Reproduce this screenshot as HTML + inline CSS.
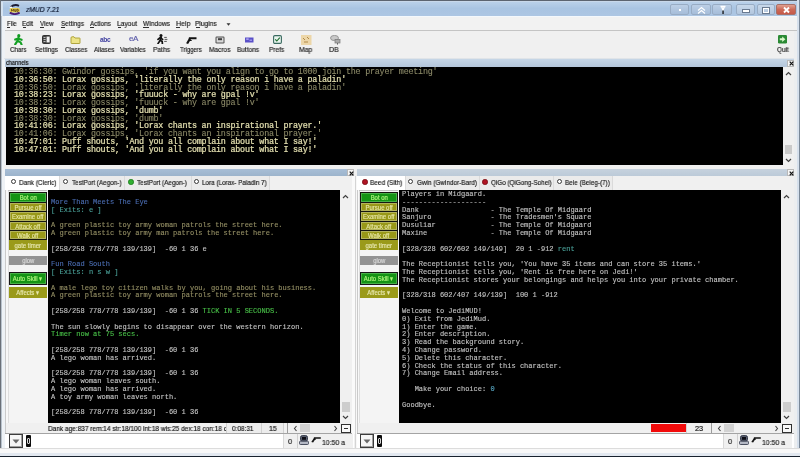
<!DOCTYPE html><html><head><meta charset="utf-8"><style>
*{margin:0;padding:0;box-sizing:border-box}
html,body{width:800px;height:457px;overflow:hidden;background:#f0f0f0;font-family:"Liberation Sans",sans-serif}
.a{position:absolute;will-change:transform}
.nw{white-space:nowrap}
.tx{-webkit-text-stroke:0.18px currentColor}
.ch{font-family:"Liberation Mono",monospace;font-size:8.4px;line-height:7.75px;letter-spacing:-0.215px;white-space:pre;color:#e4e0b0;font-weight:normal;-webkit-text-stroke:0.2px #e4e0b0}
.ch .d{color:#8c8a68;-webkit-text-stroke:0.1px #8c8a68}
.mt{font-family:"Liberation Mono",monospace;font-size:7.03px;line-height:7.80px;white-space:pre;color:#c4c4c4;-webkit-text-stroke:0.12px}
.bl{color:#4a6cb0}.cy{color:#4aa098}.ol{color:#948f64}.gr{color:#48c048}
</style></head><body>
<div class="a" style="left:0;top:0;width:800px;height:1px;background:#5c6470"></div>
<div class="a" style="left:0;top:0;width:1px;height:457px;background:#6a7078"></div>
<div class="a" style="left:1px;top:1px;width:796px;height:15px;background:linear-gradient(#bcd2ea,#a9c4e2 50%,#adc6e3)"></div>
<div class="a" style="left:1px;top:1px;width:2px;height:15px;background:#d4e2f0"></div>
<div class="a" style="left:1px;top:1px;width:796px;height:1px;background:#c8d8ea"></div>
<div class="a" style="left:797px;top:0;width:2px;height:457px;background:#d6e0ec"></div>
<div class="a" style="left:799px;top:0;width:1px;height:457px;background:#7a8898"></div>
<div class="a" style="left:1px;top:16px;width:796px;height:1px;background:#f4f8fc"></div>
<div class="a" style="left:1px;top:17px;width:796px;height:13px;background:#f2f2f2"></div>
<div class="a" style="left:1px;top:30px;width:796px;height:1px;background:#c4c4c4"></div>
<div class="a" style="left:1px;top:16px;width:1px;height:440px;background:#b8c2cc"></div>
<div class="a" style="left:2px;top:16px;width:3px;height:440px;background:#eef2f6"></div>
<div class="a" style="left:0;top:448px;width:800px;height:1px;background:#dcdcdc"></div>
<div class="a" style="left:0;top:449px;width:800px;height:4px;background:#f8f8f8"></div>
<div class="a" style="left:0;top:453px;width:800px;height:3px;background:#e2e8f0"></div>
<div class="a" style="left:0;top:456px;width:800px;height:1px;background:#18222e"></div>
<div class="a nw tx " style="left:25.73px;top:6.22px;font-size:7.54px;line-height:7.54px;color:#0e1830;transform:scaleX(0.885);transform-origin:0 0;font-style:italic">zMUD 7.21</div>
<svg class="a" style="left:8px;top:3px" width="13" height="12" viewBox="0 0 13 12">
<path d="M2.5 4.2 Q6.5 0.8 11 2.8" stroke="#1c1c34" stroke-width="1.9" fill="none"/>
<ellipse cx="3" cy="4.3" rx="1.4" ry="0.9" fill="#ffffff"/>
<rect x="1.5" y="5" width="10.5" height="4.6" rx="2.2" fill="#e6cc50"/>
<path d="M3.5 8.4 V6.2 L4.6 7.6 L5.7 6.2 V8.4 M6.8 6.2 V8.4 H8 V6.2 M9 6.2 V8.4 Q10.6 8.4 10.6 7.3 Q10.6 6.2 9 6.2" stroke="#5a4010" stroke-width="0.8" fill="none"/>
<path d="M1.8 9.6 Q6.8 12.6 11.6 9.6" stroke="#4a1c78" stroke-width="1.9" fill="none"/>
</svg>
<div class="a" style="left:670px;top:4px;width:19px;height:11px;border:1px solid #98acc4;border-radius:2px;background:linear-gradient(#bccfe6,#a6bdd9)"><div class="a" style="left:7.5px;top:3.5px;width:2px;height:2px;background:#fff"></div></div>
<div class="a" style="left:691px;top:4px;width:20px;height:11px;border:1px solid #98acc4;border-radius:2px;background:linear-gradient(#bccfe6,#a6bdd9)"><svg class="a" style="left:4.5px;top:0.5px" width="9" height="8"><path d="M1 4.5 L4.5 1.5 L8 4.5 M1 7.5 L4.5 4.5 L8 7.5" stroke="#fff" stroke-width="1.2" fill="none"/></svg></div>
<div class="a" style="left:712px;top:4px;width:20px;height:11px;border:1px solid #98acc4;border-radius:2px;background:linear-gradient(#bccfe6,#a6bdd9)"><svg class="a" style="left:5.5px;top:0px" width="8" height="10"><path d="M1.5 1.5 H6.5 M2.5 1.5 L4 5 L5.5 1.5" stroke="#fff" stroke-width="1.3" fill="none"/><rect x="3.4" y="5.5" width="1.3" height="3.5" fill="#101010"/></svg></div>
<div class="a" style="left:736px;top:4px;width:19px;height:11px;border:1px solid #98acc4;border-radius:2px;background:linear-gradient(#c8d8ea,#b2c6de)"><div class="a" style="left:6px;top:5px;width:6px;height:2px;background:#fff;box-shadow:0 0 0 1px #6a7a90"></div></div>
<div class="a" style="left:757px;top:4px;width:18px;height:11px;border:1px solid #98acc4;border-radius:2px;background:linear-gradient(#c8d8ea,#b2c6de)"><div class="a" style="left:5px;top:2.5px;width:6px;height:5px;border:1.3px solid #fff;box-shadow:0 0 0 1px #6a7a90"></div></div>
<div class="a" style="left:776px;top:4px;width:20px;height:11px;border:1px solid #a87068;border-radius:2px;background:linear-gradient(#e0a090,#cc6a58 50%,#c65848)"><svg class="a" style="left:4.5px;top:0.5px" width="9" height="8"><path d="M2 1.5 L7 6.5 M7 1.5 L2 6.5" stroke="#fff" stroke-width="1.9"/></svg></div>
<div class="a nw tx " style="left:6.50px;top:19.50px;font-size:7.68px;line-height:7.68px;color:#1a1a1a;transform:scaleX(0.789);transform-origin:0 0;">File</div>
<div class="a" style="left:7.00px;top:27px;width:2.96px;height:1px;background:#303030"></div>
<div class="a nw tx " style="left:22.47px;top:19.50px;font-size:7.68px;line-height:7.68px;color:#1a1a1a;transform:scaleX(0.837);transform-origin:0 0;">Edit</div>
<div class="a" style="left:23.00px;top:27px;width:3.48px;height:1px;background:#303030"></div>
<div class="a nw tx " style="left:39.97px;top:19.50px;font-size:7.68px;line-height:7.68px;color:#1a1a1a;transform:scaleX(0.827);transform-origin:0 0;">View</div>
<div class="a" style="left:40.00px;top:27px;width:4.18px;height:1px;background:#303030"></div>
<div class="a nw tx " style="left:60.71px;top:19.50px;font-size:7.68px;line-height:7.68px;color:#1a1a1a;transform:scaleX(0.829);transform-origin:0 0;">Settings</div>
<div class="a" style="left:61.00px;top:27px;width:3.67px;height:1px;background:#303030"></div>
<div class="a nw tx " style="left:90.24px;top:19.50px;font-size:7.68px;line-height:7.68px;color:#1a1a1a;transform:scaleX(0.829);transform-origin:0 0;">Actions</div>
<div class="a" style="left:90.25px;top:27px;width:4.22px;height:1px;background:#303030"></div>
<div class="a nw tx " style="left:116.95px;top:19.50px;font-size:7.68px;line-height:7.68px;color:#1a1a1a;transform:scaleX(0.871);transform-origin:0 0;">Layout</div>
<div class="a" style="left:117.50px;top:27px;width:2.95px;height:1px;background:#303030"></div>
<div class="a nw tx " style="left:143.22px;top:19.50px;font-size:7.68px;line-height:7.68px;color:#1a1a1a;transform:scaleX(0.867);transform-origin:0 0;">Windows</div>
<div class="a" style="left:143.25px;top:27px;width:6.23px;height:1px;background:#303030"></div>
<div class="a nw tx " style="left:175.67px;top:19.50px;font-size:7.68px;line-height:7.68px;color:#1a1a1a;transform:scaleX(0.926);transform-origin:0 0;">Help</div>
<div class="a" style="left:176.25px;top:27px;width:3.97px;height:1px;background:#303030"></div>
<div class="a nw tx " style="left:195.21px;top:19.50px;font-size:7.68px;line-height:7.68px;color:#1a1a1a;transform:scaleX(0.865);transform-origin:0 0;">Plugins</div>
<div class="a" style="left:195.75px;top:27px;width:3.54px;height:1px;background:#303030"></div>
<svg class="a" style="left:225.8px;top:22.5px" width="5" height="3"><path d="M0.5 0.3 H4.5 L2.5 2.8 Z" fill="#333"/></svg>
<div class="a nw tx " style="left:9.69px;top:45.85px;font-size:7.26px;line-height:7.26px;color:#222;transform:scaleX(0.854);transform-origin:0 0;">Chars</div>
<div class="a nw tx " style="left:35.46px;top:45.85px;font-size:7.26px;line-height:7.26px;color:#222;transform:scaleX(0.877);transform-origin:0 0;">Settings</div>
<div class="a nw tx " style="left:64.68px;top:45.85px;font-size:7.26px;line-height:7.26px;color:#222;transform:scaleX(0.863);transform-origin:0 0;">Classes</div>
<div class="a nw tx " style="left:93.99px;top:45.85px;font-size:7.26px;line-height:7.26px;color:#222;transform:scaleX(0.875);transform-origin:0 0;">Aliases</div>
<div class="a nw tx " style="left:119.97px;top:45.85px;font-size:7.26px;line-height:7.26px;color:#222;transform:scaleX(0.867);transform-origin:0 0;">Variables</div>
<div class="a nw tx " style="left:153.20px;top:45.85px;font-size:7.26px;line-height:7.26px;color:#222;transform:scaleX(0.917);transform-origin:0 0;">Paths</div>
<div class="a nw tx " style="left:180.36px;top:45.85px;font-size:7.26px;line-height:7.26px;color:#222;transform:scaleX(0.828);transform-origin:0 0;">Triggers</div>
<div class="a nw tx " style="left:208.71px;top:45.85px;font-size:7.26px;line-height:7.26px;color:#222;transform:scaleX(0.904);transform-origin:0 0;">Macros</div>
<div class="a nw tx " style="left:237.47px;top:45.85px;font-size:7.26px;line-height:7.26px;color:#222;transform:scaleX(0.894);transform-origin:0 0;">Buttons</div>
<div class="a nw tx " style="left:269.46px;top:45.85px;font-size:7.26px;line-height:7.26px;color:#222;transform:scaleX(0.901);transform-origin:0 0;">Prefs</div>
<div class="a nw tx " style="left:298.94px;top:45.85px;font-size:7.26px;line-height:7.26px;color:#222;transform:scaleX(0.945);transform-origin:0 0;">Map</div>
<div class="a nw tx " style="left:329.43px;top:45.85px;font-size:7.26px;line-height:7.26px;color:#222;transform:scaleX(0.960);transform-origin:0 0;">DB</div>
<div class="a nw tx " style="left:776.70px;top:45.85px;font-size:7.26px;line-height:7.26px;color:#222;transform:scaleX(0.874);transform-origin:0 0;">Quit</div>
<svg class="a" style="left:14px;top:34px" width="9" height="11" viewBox="0 0 9 11">
<circle cx="4.8" cy="1.7" r="1.6" fill="#129a22"/>
<path d="M4.6 3.4 L3.4 7 M1.2 5.6 L4 4.6 L7.6 5.8 M3.6 6.6 L1.2 10.4 M3.8 6.8 L6.6 8.4 L7.6 10.6" stroke="#14a024" stroke-width="2.1" stroke-linecap="round" fill="none"/>
</svg>
<svg class="a" style="left:42px;top:35px" width="9" height="9" viewBox="0 0 9 9">
<rect x="0.5" y="0.5" width="8" height="8" rx="1" fill="#444" stroke="#333"/>
<rect x="4.6" y="1.6" width="3" height="5.8" fill="#f4f4f4"/>
<rect x="1.5" y="2" width="2" height="1" fill="#bbb"/><rect x="1.5" y="4" width="2.2" height="1" fill="#bbb"/><rect x="1.5" y="6" width="2" height="1" fill="#bbb"/>
</svg>
<svg class="a" style="left:70px;top:35.5px" width="11" height="8" viewBox="0 0 11 8">
<path d="M1 2 L1 7 Q1 7.5 1.5 7.5 H9.5 Q10 7.5 10 7 V2.5 Q10 2 9.5 2 H5 L4 0.8 H2 Q1 0.8 1 2 Z" fill="#ece488" stroke="#a89c30" stroke-width="0.9"/>
</svg>
<div class="a nw" style="left:100.3px;top:36.2px;font-size:6.6px;line-height:7px;font-weight:bold;color:#4040a0;letter-spacing:-0.35px">abc</div>
<div class="a nw" style="left:128.8px;top:34.8px;font-size:8px;line-height:8px;color:#5a5aa8;letter-spacing:-0.5px;-webkit-text-stroke:0.2px #5a5aa8">eA</div>
<svg class="a" style="left:157px;top:34px" width="11" height="10" viewBox="0 0 11 10">
<circle cx="4" cy="1.5" r="1.5" fill="#111"/>
<path d="M4.2 3.2 L3.2 6.4 M1 5.4 L3.2 3.6 L5.6 5.4 M3.2 6.2 L1 9.6 M3.4 6.4 L5.2 7.6 L5.4 9.8" stroke="#111" stroke-width="1.7" stroke-linecap="round" fill="none"/>
<path d="M7.2 3.4 H9.8 M7.6 5.4 H10.4 M7.2 7.4 H9.8" stroke="#444" stroke-width="0.9"/>
</svg>
<svg class="a" style="left:186px;top:36.5px" width="11" height="7" viewBox="0 0 11 7">
<path d="M3 0.3 H10.5 V2.2 H5 L4.5 2.9 H6 L5.4 4 H3.9 L2.1 6.9 L0.1 6.2 L2.5 2.1 Z" fill="#121212"/>
</svg>
<svg class="a" style="left:215px;top:36px" width="10" height="8" viewBox="0 0 10 8">
<rect x="0.5" y="0.5" width="9" height="7" rx="1.2" fill="#505050"/>
<rect x="1.5" y="1.5" width="7" height="5" fill="#d8d8d8"/>
<rect x="3" y="2.2" width="4" height="2" fill="#404040"/>
</svg>
<svg class="a" style="left:245px;top:36.5px" width="9" height="6" viewBox="0 0 9 6">
<rect x="0" y="0.5" width="8.5" height="5" fill="#5a50c8"/>
<rect x="1.2" y="1.5" width="2.5" height="1.2" fill="#c8c0ff"/><rect x="4.5" y="2.5" width="2.5" height="1.5" fill="#9890e8"/>
</svg>
<svg class="a" style="left:272.5px;top:35px" width="9" height="9" viewBox="0 0 9 9">
<rect x="0.6" y="0.6" width="7.8" height="7.8" rx="1.2" fill="#e8f4ee" stroke="#3a6a60" stroke-width="1.1"/>
<path d="M2.2 4.4 L3.8 6 L6.8 2.6" stroke="#1a6a2a" stroke-width="1.1" fill="none"/>
</svg>
<svg class="a" style="left:301px;top:34.5px" width="11" height="10" viewBox="0 0 11 10">
<rect x="0" y="0" width="10.5" height="10" fill="#ecd6a8"/>
<path d="M2 3 L4 5 M6 2 L8 4 M3 7 H7" stroke="#b08848" stroke-width="1"/>
</svg>
<svg class="a" style="left:330px;top:35px" width="11" height="10" viewBox="0 0 11 10">
<ellipse cx="4.5" cy="3" rx="4" ry="2.6" fill="#c8c8c8" stroke="#888" stroke-width="0.8"/>
<rect x="5" y="4.5" width="5" height="3.5" fill="#aaa" stroke="#777" stroke-width="0.7"/>
<path d="M7.5 8 V9.6" stroke="#666" stroke-width="1"/>
</svg>
<svg class="a" style="left:778px;top:34.5px" width="9" height="9" viewBox="0 0 9 9">
<rect x="0" y="0" width="9" height="8.5" rx="1.2" fill="#2a8a34"/>
<path d="M1.8 3.2 H4.2 V1.5 L7.4 4.25 L4.2 7 V5.3 H1.8 Z" fill="#d8f8c8"/>
</svg>
<div class="a" style="left:4px;top:58px;width:790px;height:1px;background:#e0e4e8"></div>
<div class="a" style="left:5px;top:59px;width:789px;height:8px;background:linear-gradient(#c6d6e6,#b4c6da)"></div>
<div class="a nw tx " style="left:5.76px;top:59.93px;font-size:6.70px;line-height:6.70px;color:#101010;transform:scaleX(0.836);transform-origin:0 0;">channels</div>
<div class="a" style="left:787px;top:59.5px;width:7px;height:7px;background:#f6f6f6;border:1px solid #b8b8b8"></div>
<svg class="a" style="left:788.5px;top:61px" width="5" height="5"><path d="M0.7 0.7 L4.3 4.3 M4.3 0.7 L0.7 4.3" stroke="#111" stroke-width="1.2"/></svg>
<div class="a" style="left:6px;top:67px;width:777px;height:98px;background:#000"></div>
<div class="a" style="left:783px;top:67px;width:10px;height:98px;background:#f0f0f0"></div>
<svg class="a" style="left:785px;top:70.5px" width="7" height="5"><path d="M1 4 L3.5 1.5 L6 4" stroke="#404040" stroke-width="1.2" fill="none"/></svg>
<svg class="a" style="left:785px;top:158px" width="7" height="5"><path d="M1 1 L3.5 3.5 L6 1" stroke="#404040" stroke-width="1.2" fill="none"/></svg>
<div class="a" style="left:785px;top:145px;width:7px;height:9px;background:#cacaca"></div>
<div class="a ch" id="chan" style="left:14.4px;top:69.3px"><span class="d">10:36:30: Gwindor gossips, 'if you want you align to go to 1000 join the prayer meeting'</span>
10:36:50: Lorax gossips, 'literally the only reason i have a paladin'
<span class="d">10:36:50: Lorax gossips, 'literally the only reason i have a paladin'</span>
10:38:23: Lorax gossips, 'fuuuck - why are gpal !v'
<span class="d">10:38:23: Lorax gossips, 'fuuuck - why are gpal !v'</span>
10:38:30: Lorax gossips, 'dumb'
<span class="d">10:38:30: Lorax gossips, 'dumb'</span>
10:41:06: Lorax gossips, 'Lorax chants an inspirational prayer.'
<span class="d">10:41:06: Lorax gossips, 'Lorax chants an inspirational prayer.'</span>
10:47:01: Puff shouts, 'And you all complain about what I say!'
10:47:01: Puff shouts, 'And you all complain about what I say!'</div>
<div class="a" style="left:4px;top:165px;width:793px;height:4px;background:#f0f0f0"></div>
<div class="a" style="left:5px;top:169px;width:349px;height:7px;background:linear-gradient(#a8bed6,#9cb4cc)"></div>
<div class="a" style="left:347px;top:169px;width:7px;height:7px;background:#f6f6f6;border:1px solid #b8b8b8"></div>
<svg class="a" style="left:348.5px;top:170.5px" width="5" height="5"><path d="M0.7 0.7 L4.3 4.3 M4.3 0.7 L0.7 4.3" stroke="#111" stroke-width="1.2"/></svg>
<div class="a" style="left:5px;top:176px;width:349px;height:14px;background:#f0f0f0"></div>
<div class="a" style="left:5px;top:176px;width:55px;height:14px;background:#ffffff;border-right:1px solid #dadada"></div>
<div class="a" style="left:10.8px;top:179.2px;width:5px;height:5px;border-radius:50%;border:1px solid #383838;background:#fff"></div>
<div class="a nw tx " style="left:18.97px;top:178.85px;font-size:7.26px;line-height:7.26px;color:#1a1a1a;transform:scaleX(0.883);transform-origin:0 0;">Dank (Cleric)</div>
<div class="a" style="left:60px;top:176px;width:65px;height:14px;background:#ebebeb;border-right:1px solid #dadada"></div>
<div class="a" style="left:63.3px;top:179.2px;width:5px;height:5px;border-radius:50%;border:1px solid #383838;background:#fff"></div>
<div class="a nw tx " style="left:71.86px;top:178.85px;font-size:7.26px;line-height:7.26px;color:#1a1a1a;transform:scaleX(0.869);transform-origin:0 0;">TestPort (Aegon-)</div>
<div class="a" style="left:125px;top:176px;width:67px;height:14px;background:#ebebeb;border-right:1px solid #dadada"></div>
<div class="a" style="left:128.45000000000002px;top:179px;width:5.5px;height:5.5px;border-radius:50%;background:#30b030;border:1px solid #208020"></div>
<div class="a nw tx " style="left:137.26px;top:178.85px;font-size:7.26px;line-height:7.26px;color:#1a1a1a;transform:scaleX(0.877);transform-origin:0 0;">TestPort (Aegon-)</div>
<div class="a" style="left:192px;top:176px;width:78px;height:14px;background:#ebebeb;border-right:1px solid #dadada"></div>
<div class="a" style="left:193.8px;top:179.2px;width:5px;height:5px;border-radius:50%;border:1px solid #383838;background:#fff"></div>
<div class="a nw tx " style="left:201.98px;top:178.85px;font-size:7.26px;line-height:7.26px;color:#1a1a1a;transform:scaleX(0.871);transform-origin:0 0;">Lora (Lorax- Paladin 7)</div>
<div class="a" style="left:5px;top:190px;width:43px;height:233px;background:#f4f4f4"></div>
<div class="a" style="left:5px;top:190px;width:1px;height:243px;background:#cacaca"></div>
<div class="a" style="left:6px;top:190px;width:2px;height:233px;background:#f8f8f8"></div>
<div class="a" style="left:8px;top:190px;width:1px;height:233px;background:#dedede"></div>
<div class="a" style="left:8px;top:190px;width:39px;height:1px;background:#c4c4c4"></div>
<div class="a" style="left:9px;top:192px;width:38px;height:48px;background:#161610"></div>
<div class="a" style="left:9px;top:272px;width:38px;height:13px;background:#161616"></div>
<div class="a" style="left:10px;top:193px;width:36px;height:9px;background:#149414;border:1px solid #48b048"></div>
<div class="a nw" style="left:9px;top:193.8px;width:38px;height:9px;line-height:9px;font-size:7.1px;text-align:center;color:#b4f880;overflow:visible;-webkit-text-stroke:0.15px #b4f880"><span style="display:inline-block;transform:scaleX(.84)">Bot on</span></div>
<div class="a" style="left:10px;top:203px;width:36px;height:8px;background:#989818;border:1px solid #b4b45c"></div>
<div class="a nw" style="left:9px;top:203.8px;width:38px;height:8px;line-height:8px;font-size:7.1px;text-align:center;color:#e6e6a6;overflow:visible;-webkit-text-stroke:0.15px #e6e6a6"><span style="display:inline-block;transform:scaleX(.84)">Pursue off</span></div>
<div class="a" style="left:10px;top:212px;width:36px;height:9px;background:#989818;border:1px solid #b4b45c"></div>
<div class="a nw" style="left:9px;top:212.8px;width:38px;height:9px;line-height:9px;font-size:7.1px;text-align:center;color:#e6e6a6;overflow:visible;-webkit-text-stroke:0.15px #e6e6a6"><span style="display:inline-block;transform:scaleX(.84)">Examine off</span></div>
<div class="a" style="left:10px;top:222px;width:36px;height:8px;background:#989818;border:1px solid #b4b45c"></div>
<div class="a nw" style="left:9px;top:222.8px;width:38px;height:8px;line-height:8px;font-size:7.1px;text-align:center;color:#e6e6a6;overflow:visible;-webkit-text-stroke:0.15px #e6e6a6"><span style="display:inline-block;transform:scaleX(.84)">Attack off</span></div>
<div class="a" style="left:10px;top:231px;width:36px;height:8px;background:#989818;border:1px solid #b4b45c"></div>
<div class="a nw" style="left:9px;top:231.8px;width:38px;height:8px;line-height:8px;font-size:7.1px;text-align:center;color:#e6e6a6;overflow:visible;-webkit-text-stroke:0.15px #e6e6a6"><span style="display:inline-block;transform:scaleX(.84)">Walk off</span></div>
<div class="a" style="left:9px;top:240px;width:38px;height:10px;background:#9a9a1a"></div>
<div class="a nw" style="left:9px;top:240.8px;width:38px;height:10px;line-height:10px;font-size:7.1px;text-align:center;color:#e8e8b0;overflow:visible;-webkit-text-stroke:0.15px #e8e8b0"><span style="display:inline-block;transform:scaleX(.84)">gate timer</span></div>
<div class="a" style="left:9px;top:256px;width:38px;height:9px;background:#939393"></div>
<div class="a nw" style="left:9px;top:256.8px;width:38px;height:9px;line-height:9px;font-size:7.1px;text-align:center;color:#dcdcdc;overflow:visible;-webkit-text-stroke:0.15px #dcdcdc"><span style="display:inline-block;transform:scaleX(.84)">glow</span></div>
<div class="a" style="left:10px;top:273px;width:36px;height:11px;background:#149414;border:1px solid #48b048"></div>
<div class="a nw" style="left:9px;top:273.8px;width:38px;height:11px;line-height:11px;font-size:7.1px;text-align:center;color:#b4f880;overflow:visible;-webkit-text-stroke:0.15px #b4f880"><span style="display:inline-block;transform:scaleX(.84)">Auto Skill ▾</span></div>
<div class="a" style="left:9px;top:287px;width:38px;height:11px;background:#9a9a1a"></div>
<div class="a nw" style="left:9px;top:287.8px;width:38px;height:11px;line-height:11px;font-size:7.1px;text-align:center;color:#e8e8b0;overflow:visible;-webkit-text-stroke:0.15px #e8e8b0"><span style="display:inline-block;transform:scaleX(.84)">Affects ▾</span></div>
<div class="a" style="left:48px;top:190px;width:292px;height:233px;background:#000"></div>
<div class="a" style="left:340px;top:190px;width:12px;height:233px;background:#f0f0f0"></div>
<svg class="a" style="left:341.5px;top:194px" width="7" height="5"><path d="M1 4 L3.5 1.5 L6 4" stroke="#404040" stroke-width="1.2" fill="none"/></svg>
<svg class="a" style="left:341.5px;top:415px" width="7" height="5"><path d="M1 1 L3.5 3.5 L6 1" stroke="#404040" stroke-width="1.2" fill="none"/></svg>
<div class="a" style="left:342px;top:402px;width:8px;height:10px;background:#cdcdcd"></div>
<div class="a mt" style="left:50.8px;top:190.9px">
<span class="bl">More Than Meets The Eye</span>
<span class="cy">[ Exits: e ]</span>

<span class="ol">A green plastic toy army woman patrols the street here.</span>
<span class="ol">A green plastic toy army man patrols the street here.</span>

[258/258 778/778 139/139]  -60 1 36 e

<span class="bl">Fun Road South</span>
<span class="cy">[ Exits: n s w ]</span>

<span class="ol">A male lego toy citizen walks by you, going about his business.</span>
<span class="ol">A green plastic toy army woman patrols the street here.</span>

[258/258 778/778 139/139]  -60 1 36 <span class="gr">TICK IN 5 SECONDS.</span>

The sun slowly begins to disappear over the western horizon.
<span class="gr">Timer now at 75 secs.</span>

[258/258 778/778 139/139]  -60 1 36
A lego woman has arrived.

[258/258 778/778 139/139]  -60 1 36
A lego woman leaves south.
A lego woman has arrived.
A toy army woman leaves north.

[258/258 778/778 139/139]  -60 1 36</div>
<div class="a" style="left:48px;top:423px;width:304px;height:10px;background:#f0f0f0"></div>
<div class="a nw tx " style="left:48.47px;top:424.53px;font-size:7.40px;line-height:7.40px;color:#141414;transform:scaleX(0.880);transform-origin:0 0;">Dank age:837 rem:14 str:18/100 int:18 wis:25 dex:18 con:18 c</div>
<div class="a" style="left:226px;top:423px;width:57px;height:10px;background:#ececec"></div>
<div class="a" style="left:226px;top:423px;width:1px;height:10px;background:#d0d0d0"></div>
<div class="a nw tx " style="left:232.25px;top:424.53px;font-size:7.40px;line-height:7.40px;color:#141414;transform:scaleX(0.873);transform-origin:0 0;">0:08:31</div>
<div class="a" style="left:261px;top:423px;width:1px;height:10px;background:#d0d0d0"></div>
<div class="a nw tx " style="left:269.46px;top:424.53px;font-size:7.40px;line-height:7.40px;color:#141414;transform:scaleX(0.951);transform-origin:0 0;">15</div>
<div class="a" style="left:283px;top:423px;width:1px;height:10px;background:#d0d0d0"></div>
<div class="a" style="left:287px;top:423px;width:1px;height:10px;background:#9c9c9c"></div>
<svg class="a" style="left:293px;top:425px" width="5" height="7"><path d="M3.5 1 L1.5 3.5 L3.5 6" stroke="#404040" stroke-width="1.1" fill="none"/></svg>
<div class="a" style="left:300px;top:424px;width:10px;height:8px;background:#d2d2d2"></div>
<svg class="a" style="left:333px;top:425px" width="5" height="7"><path d="M1.5 1 L3.5 3.5 L1.5 6" stroke="#404040" stroke-width="1.1" fill="none"/></svg>
<div class="a" style="left:341px;top:424px;width:10px;height:9px;border:1px solid #303030;background:#f8f8f8"><div class="a" style="left:2px;top:3px;width:4px;height:1px;background:#303030"></div></div>
<div class="a" style="left:5px;top:433px;width:349px;height:1px;background:#a4a4a4"></div>
<div class="a" style="left:5px;top:434px;width:349px;height:14px;background:#ffffff"></div>
<div class="a" style="left:9px;top:434px;width:14px;height:14px;border:1px solid #3c3c3c;background:#f6f6f6;box-shadow:inset -1px -1px 0 #a0a0a0"></div>
<svg class="a" style="left:12px;top:438.5px" width="8" height="5"><path d="M0.5 0.5 H7.5 L4 4.5 Z" fill="#6a6a6a"/></svg>
<div class="a" style="left:25.5px;top:435px;width:4.5px;height:11.5px;background:#0c0c0c;border-radius:1px"></div>
<div class="a" style="left:26.5px;top:437.5px;width:2.5px;height:6px;border:0.8px solid #d8d8d8;border-radius:1px"></div>
<div class="a" style="left:357px;top:169px;width:437px;height:7px;background:linear-gradient(#c6d2de,#bccad8)"></div>
<div class="a" style="left:787px;top:169px;width:7px;height:7px;background:#f6f6f6;border:1px solid #b8b8b8"></div>
<svg class="a" style="left:788.5px;top:170.5px" width="5" height="5"><path d="M0.7 0.7 L4.3 4.3 M4.3 0.7 L0.7 4.3" stroke="#111" stroke-width="1.2"/></svg>
<div class="a" style="left:357px;top:176px;width:437px;height:14px;background:#f0f0f0"></div>
<div class="a" style="left:357px;top:176px;width:49px;height:14px;background:#ffffff;border-right:1px solid #dadada"></div>
<div class="a" style="left:361.55px;top:179px;width:5.5px;height:5.5px;border-radius:50%;background:#b01424;border:1px solid #801018"></div>
<div class="a nw tx " style="left:369.97px;top:178.85px;font-size:7.26px;line-height:7.26px;color:#1a1a1a;transform:scaleX(0.893);transform-origin:0 0;">Beed (Sith)</div>
<div class="a" style="left:406px;top:176px;width:74px;height:14px;background:#ebebeb;border-right:1px solid #dadada"></div>
<div class="a" style="left:408.3px;top:179.2px;width:5px;height:5px;border-radius:50%;border:1px solid #383838;background:#fff"></div>
<div class="a nw tx " style="left:416.68px;top:178.85px;font-size:7.26px;line-height:7.26px;color:#1a1a1a;transform:scaleX(0.879);transform-origin:0 0;">Gwin (Gwindor-Bard)</div>
<div class="a" style="left:480px;top:176px;width:74px;height:14px;background:#ebebeb;border-right:1px solid #dadada"></div>
<div class="a" style="left:482.3px;top:179px;width:5.5px;height:5.5px;border-radius:50%;background:#b01424;border:1px solid #801018"></div>
<div class="a nw tx " style="left:490.95px;top:178.85px;font-size:7.26px;line-height:7.26px;color:#1a1a1a;transform:scaleX(0.871);transform-origin:0 0;">QiGo (QiGong-Sohei)</div>
<div class="a" style="left:554px;top:176px;width:59px;height:14px;background:#ebebeb;border-right:1px solid #dadada"></div>
<div class="a" style="left:557.3px;top:179.2px;width:5px;height:5px;border-radius:50%;border:1px solid #383838;background:#fff"></div>
<div class="a nw tx " style="left:565.48px;top:178.85px;font-size:7.26px;line-height:7.26px;color:#1a1a1a;transform:scaleX(0.876);transform-origin:0 0;">Bele (Beleg-(7))</div>
<div class="a" style="left:357px;top:190px;width:42px;height:233px;background:#f4f4f4"></div>
<div class="a" style="left:357px;top:190px;width:1px;height:243px;background:#cacaca"></div>
<div class="a" style="left:358px;top:190px;width:1px;height:233px;background:#f8f8f8"></div>
<div class="a" style="left:359px;top:190px;width:1px;height:233px;background:#dedede"></div>
<div class="a" style="left:359px;top:190px;width:39px;height:1px;background:#c4c4c4"></div>
<div class="a" style="left:360px;top:192px;width:38px;height:48px;background:#161610"></div>
<div class="a" style="left:360px;top:272px;width:38px;height:13px;background:#161616"></div>
<div class="a" style="left:361px;top:193px;width:36px;height:9px;background:#149414;border:1px solid #48b048"></div>
<div class="a nw" style="left:360px;top:193.8px;width:38px;height:9px;line-height:9px;font-size:7.1px;text-align:center;color:#b4f880;overflow:visible;-webkit-text-stroke:0.15px #b4f880"><span style="display:inline-block;transform:scaleX(.84)">Bot on</span></div>
<div class="a" style="left:361px;top:203px;width:36px;height:8px;background:#989818;border:1px solid #b4b45c"></div>
<div class="a nw" style="left:360px;top:203.8px;width:38px;height:8px;line-height:8px;font-size:7.1px;text-align:center;color:#e6e6a6;overflow:visible;-webkit-text-stroke:0.15px #e6e6a6"><span style="display:inline-block;transform:scaleX(.84)">Pursue off</span></div>
<div class="a" style="left:361px;top:212px;width:36px;height:9px;background:#989818;border:1px solid #b4b45c"></div>
<div class="a nw" style="left:360px;top:212.8px;width:38px;height:9px;line-height:9px;font-size:7.1px;text-align:center;color:#e6e6a6;overflow:visible;-webkit-text-stroke:0.15px #e6e6a6"><span style="display:inline-block;transform:scaleX(.84)">Examine off</span></div>
<div class="a" style="left:361px;top:222px;width:36px;height:8px;background:#989818;border:1px solid #b4b45c"></div>
<div class="a nw" style="left:360px;top:222.8px;width:38px;height:8px;line-height:8px;font-size:7.1px;text-align:center;color:#e6e6a6;overflow:visible;-webkit-text-stroke:0.15px #e6e6a6"><span style="display:inline-block;transform:scaleX(.84)">Attack off</span></div>
<div class="a" style="left:361px;top:231px;width:36px;height:8px;background:#989818;border:1px solid #b4b45c"></div>
<div class="a nw" style="left:360px;top:231.8px;width:38px;height:8px;line-height:8px;font-size:7.1px;text-align:center;color:#e6e6a6;overflow:visible;-webkit-text-stroke:0.15px #e6e6a6"><span style="display:inline-block;transform:scaleX(.84)">Walk off</span></div>
<div class="a" style="left:360px;top:240px;width:38px;height:10px;background:#9a9a1a"></div>
<div class="a nw" style="left:360px;top:240.8px;width:38px;height:10px;line-height:10px;font-size:7.1px;text-align:center;color:#e8e8b0;overflow:visible;-webkit-text-stroke:0.15px #e8e8b0"><span style="display:inline-block;transform:scaleX(.84)">gate timer</span></div>
<div class="a" style="left:360px;top:256px;width:38px;height:9px;background:#939393"></div>
<div class="a nw" style="left:360px;top:256.8px;width:38px;height:9px;line-height:9px;font-size:7.1px;text-align:center;color:#dcdcdc;overflow:visible;-webkit-text-stroke:0.15px #dcdcdc"><span style="display:inline-block;transform:scaleX(.84)">glow</span></div>
<div class="a" style="left:361px;top:273px;width:36px;height:11px;background:#149414;border:1px solid #48b048"></div>
<div class="a nw" style="left:360px;top:273.8px;width:38px;height:11px;line-height:11px;font-size:7.1px;text-align:center;color:#b4f880;overflow:visible;-webkit-text-stroke:0.15px #b4f880"><span style="display:inline-block;transform:scaleX(.84)">Auto Skill ▾</span></div>
<div class="a" style="left:360px;top:287px;width:38px;height:11px;background:#9a9a1a"></div>
<div class="a nw" style="left:360px;top:287.8px;width:38px;height:11px;line-height:11px;font-size:7.1px;text-align:center;color:#e8e8b0;overflow:visible;-webkit-text-stroke:0.15px #e8e8b0"><span style="display:inline-block;transform:scaleX(.84)">Affects ▾</span></div>
<div class="a" style="left:399px;top:190px;width:382px;height:233px;background:#000"></div>
<div class="a" style="left:781px;top:190px;width:12px;height:233px;background:#f0f0f0"></div>
<svg class="a" style="left:782.5px;top:194px" width="7" height="5"><path d="M1 4 L3.5 1.5 L6 4" stroke="#404040" stroke-width="1.2" fill="none"/></svg>
<svg class="a" style="left:782.5px;top:415px" width="7" height="5"><path d="M1 1 L3.5 3.5 L6 1" stroke="#404040" stroke-width="1.2" fill="none"/></svg>
<div class="a" style="left:783px;top:402px;width:8px;height:10px;background:#cdcdcd"></div>
<div class="a mt" style="left:401.8px;top:190.9px">Players in Midgaard.
--------------------
Dank                 - The Temple Of Midgaard
Sanjuro              - The Tradesmen's Square
Dusuliar             - The Temple Of Midgaard
Maxine               - The Temple Of Midgaard

[328/328 602/602 149/149]  20 1 -912 <span class="cy">rent</span>

The Receptionist tells you, 'You have 35 items and can store 35 items.'
The Receptionist tells you, 'Rent is free here on Jedi!'
The Receptionist stores your belongings and helps you into your private chamber.

[328/318 602/407 149/139]  100 1 -912

Welcome to JediMUD!
0) Exit from JediMud.
1) Enter the game.
2) Enter description.
3) Read the background story.
4) Change password.
5) Delete this character.
6) Check the status of this character.
7) Change Email address.

   Make your choice: <span style="color:#58a8c4">0</span>

Goodbye.</div>
<div class="a" style="left:399px;top:423px;width:394px;height:10px;background:#f0f0f0"></div>
<div class="a" style="left:651px;top:424px;width:35px;height:8px;background:#f20a0a"></div>
<div class="a" style="left:686px;top:423px;width:1px;height:10px;background:#d4d4d4"></div>
<div class="a nw tx " style="left:694.63px;top:424.53px;font-size:7.40px;line-height:7.40px;color:#141414;transform:scaleX(0.995);transform-origin:0 0;">23</div>
<div class="a" style="left:711px;top:423px;width:1px;height:10px;background:#9c9c9c"></div>
<svg class="a" style="left:717px;top:425px" width="5" height="7"><path d="M3.5 1 L1.5 3.5 L3.5 6" stroke="#404040" stroke-width="1.1" fill="none"/></svg>
<div class="a" style="left:724px;top:424px;width:10px;height:8px;background:#d2d2d2"></div>
<svg class="a" style="left:774px;top:425px" width="5" height="7"><path d="M1.5 1 L3.5 3.5 L1.5 6" stroke="#404040" stroke-width="1.1" fill="none"/></svg>
<div class="a" style="left:782px;top:424px;width:10px;height:9px;border:1px solid #303030;background:#f8f8f8"><div class="a" style="left:2px;top:3px;width:4px;height:1px;background:#303030"></div></div>
<div class="a" style="left:357px;top:433px;width:437px;height:1px;background:#a4a4a4"></div>
<div class="a" style="left:357px;top:434px;width:437px;height:14px;background:#ffffff"></div>
<div class="a" style="left:360px;top:434px;width:14px;height:14px;border:1px solid #3c3c3c;background:#f6f6f6;box-shadow:inset -1px -1px 0 #a0a0a0"></div>
<svg class="a" style="left:363px;top:438.5px" width="8" height="5"><path d="M0.5 0.5 H7.5 L4 4.5 Z" fill="#6a6a6a"/></svg>
<div class="a" style="left:376.5px;top:435px;width:4.5px;height:11.5px;background:#0c0c0c;border-radius:1px"></div>
<div class="a" style="left:377.5px;top:437.5px;width:2.5px;height:6px;border:0.8px solid #d8d8d8;border-radius:1px"></div>
<div class="a" style="left:354px;top:166px;width:3px;height:282px;background:#f0f0f0"></div>
<div class="a" style="left:352px;top:176px;width:3px;height:258px;background:#fafafa"></div>
<div class="a" style="left:355px;top:176px;width:1px;height:272px;background:#d4d4d4"></div>
<div class="a" style="left:356px;top:176px;width:1px;height:272px;background:#f8f8f8"></div>
<div class="a" style="left:345px;top:434px;width:8px;height:14px;background:#f0f0f0"></div>
<div class="a" style="left:283px;top:434px;width:62px;height:14px;background:#f0f0f0"></div>
<div class="a" style="left:283px;top:434px;width:1px;height:14px;background:#d8d8d8"></div>
<div class="a nw tx " style="left:288.21px;top:438.38px;font-size:7.82px;line-height:7.82px;color:#222;transform:scaleX(0.936);transform-origin:0 0;">0</div>
<div class="a" style="left:297px;top:434px;width:1px;height:14px;background:#d0d0d0"></div>
<svg class="a" style="left:299px;top:434.5px" width="10" height="10" viewBox="0 0 10 10"><rect x="1.5" y="0.6" width="7" height="5.6" rx="1.8" fill="#5a6070" stroke="#2a3040" stroke-width="0.9"/><rect x="3" y="2" width="4" height="2.8" fill="#0c0c14"/><rect x="0.5" y="6.2" width="9" height="3.3" rx="1" fill="#b4b8c4" stroke="#3a4050" stroke-width="0.9"/></svg>
<svg class="a" style="left:311px;top:437px" width="10" height="6" viewBox="0 0 10 6"><path d="M3 0.2 H9.8 V1.7 H4.6 L4.2 2.4 H5.2 L4.8 3 H3.8 L2.1 5.6 L0.3 5.1 L2.6 1.6 Z" fill="#141414"/></svg>
<div class="a nw tx " style="left:322.47px;top:438.88px;font-size:7.82px;line-height:7.82px;color:#222;transform:scaleX(0.882);transform-origin:0 0;">10:50 a</div>
<div class="a" style="left:723px;top:434px;width:69px;height:14px;background:#f0f0f0"></div>
<div class="a" style="left:723px;top:434px;width:1px;height:14px;background:#d8d8d8"></div>
<div class="a nw tx " style="left:728.21px;top:438.38px;font-size:7.82px;line-height:7.82px;color:#222;transform:scaleX(0.936);transform-origin:0 0;">0</div>
<div class="a" style="left:737px;top:434px;width:1px;height:14px;background:#d0d0d0"></div>
<svg class="a" style="left:739px;top:434.5px" width="10" height="10" viewBox="0 0 10 10"><rect x="1.5" y="0.6" width="7" height="5.6" rx="1.8" fill="#5a6070" stroke="#2a3040" stroke-width="0.9"/><rect x="3" y="2" width="4" height="2.8" fill="#0c0c14"/><rect x="0.5" y="6.2" width="9" height="3.3" rx="1" fill="#b4b8c4" stroke="#3a4050" stroke-width="0.9"/></svg>
<svg class="a" style="left:751px;top:437px" width="10" height="6" viewBox="0 0 10 6"><path d="M3 0.2 H9.8 V1.7 H4.6 L4.2 2.4 H5.2 L4.8 3 H3.8 L2.1 5.6 L0.3 5.1 L2.6 1.6 Z" fill="#141414"/></svg>
<div class="a nw tx " style="left:762.47px;top:438.88px;font-size:7.82px;line-height:7.82px;color:#222;transform:scaleX(0.882);transform-origin:0 0;">10:50 a</div>
<div class="a" style="left:794px;top:31px;width:3px;height:417px;background:#eceef0"></div>
</body></html>
